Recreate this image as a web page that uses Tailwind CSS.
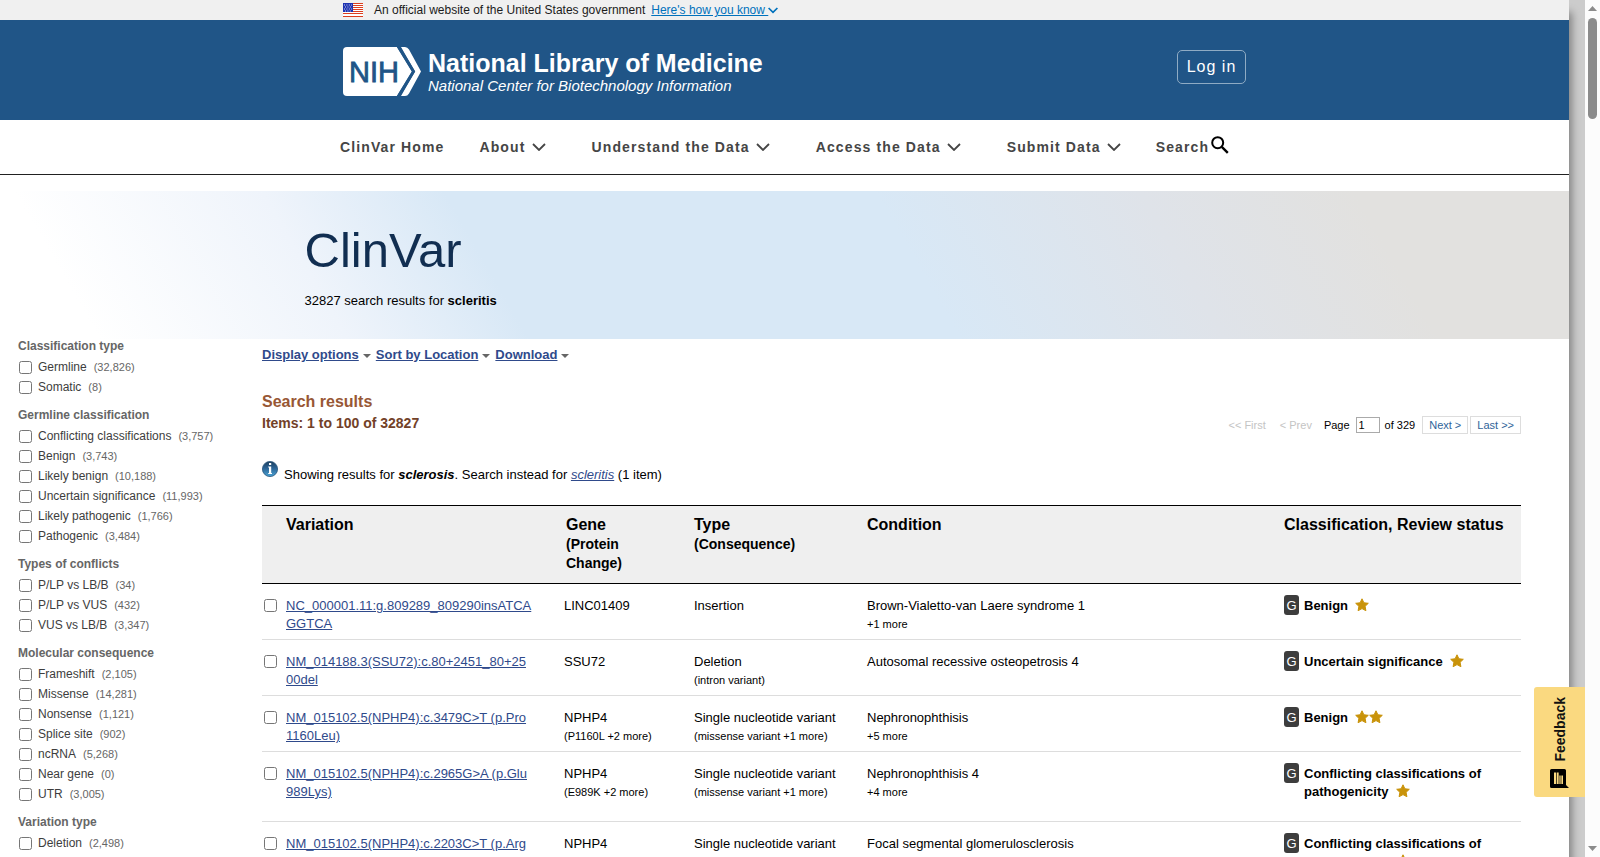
<!DOCTYPE html>
<html lang="en">
<head>
  <meta charset="UTF-8">
  <meta name="viewport" content="width=device-width, initial-scale=1.0">
  <title>scleritis - ClinVar - NCBI</title>
  <script src="https://cdn.jsdelivr.net/npm/@tailwindcss/browser@4"></script>
  <style>
    body {
      font-family: "Liberation Sans", Arial, Helvetica, sans-serif;
    }
  </style>
</head>
<body class="flex h-screen overflow-hidden bg-[#ccc] text-[13px] leading-[18px] text-black">
  <div class="relative h-screen min-w-0 flex-1 overflow-hidden bg-white shadow-[3px_12px_8px_#808080]">
    <!-- government banner -->
    <div class="h-5 bg-[#f0f0f0]">
      <div class="mx-auto flex h-5 max-w-[923px] items-center pl-5 text-xs text-[#1b1b1b]">
        <svg class="h-[14px] w-5" viewBox="0 0 20 14">
          <path fill="#fff" d="M0 0h20v14H0z"></path>
          <path stroke="#db3e1f" stroke-width="1.200" d="M0 .5h20M0 2.500h20M0 4.500h20M0 6.500h20M0 8.500h20M0 10.500h20M0 13.500h20"></path>
          <path fill="#1e33b1" d="M0 0h10v9H0z"></path>
          <path stroke="#fff" stroke-width=".8" stroke-dasharray="1 1.400" d="M1 2h8M2 4h7M1 6h8M2 8h7"></path>
        </svg>
        <span class="ml-[11px]">An official website of the United States government</span>
        <a href="#" class="ml-[6px] flex items-center text-[#0071bc] underline">Here's how you know&nbsp;<svg class="h-[7px] w-[10px]" viewBox="0 0 10 7" fill="none" stroke="currentColor" stroke-width="1.700"><path d="M.6 1 5 5.400 9.400 1"></path></svg></a>
      </div>
    </div>

    <header class="h-[100px] bg-[#205587]">
      <div class="mx-auto flex max-w-[923px] items-start justify-between pl-5">
        <a href="#" class="mt-[27px] flex text-white" aria-label="NLM home">
          <svg class="h-[49px] w-[78px]" viewBox="0 0 78 49">
            <path fill="#fff" d="M4 0h50l15 24.500L54 49H4a4 4 0 0 1-4-4V4a4 4 0 0 1 4-4z"></path>
            <path fill="#fff" d="M58 0h4q2.500 0 4 2.500L78 24.500 66 46.500Q64.500 49 62 49h-4l14-24.500z"></path>
            <path fill="none" stroke="#205587" stroke-width="3" d="M55 -1 70.500 24.500 55 50"></path>
            <text x="6" y="35" font-size="29" fill="#205587" stroke="#205587" stroke-width=".8">NIH</text>
          </svg>
          <span class="ml-[7px] mt-[2px] block">
            <span class="block text-[25px] leading-7 font-bold">National Library of Medicine</span>
            <span class="block text-[15px] leading-[18px] italic">National Center for Biotechnology Information</span>
          </span>
        </a>
        <button class="mt-[30px] h-[34px] w-[69px] rounded-[5px] border border-[#8fabc4] text-base tracking-[1px] text-white">Log in</button>
      </div>
    </header>

    <nav class="h-[55px] border-b border-[#212121]">
      <ul class="mx-auto flex h-[54px] max-w-[889px] items-center text-sm font-bold tracking-[0.08em] whitespace-nowrap text-[#454545]">
        <li><a href="#">ClinVar Home</a></li>
        <li class="ml-[35px]"><button class="flex items-center gap-[6px]">About <svg class="h-2 w-[14px]" viewBox="0 0 14 8" fill="none" stroke="currentColor" stroke-width="1.800"><path d="M1 1l6 6 6-6"></path></svg></button></li>
        <li class="ml-[46px]"><button class="flex items-center gap-[6px]">Understand the Data <svg class="h-2 w-[14px]" viewBox="0 0 14 8" fill="none" stroke="currentColor" stroke-width="1.800"><path d="M1 1l6 6 6-6"></path></svg></button></li>
        <li class="ml-[46px]"><button class="flex items-center gap-[6px]">Access the Data <svg class="h-2 w-[14px]" viewBox="0 0 14 8" fill="none" stroke="currentColor" stroke-width="1.800"><path d="M1 1l6 6 6-6"></path></svg></button></li>
        <li class="ml-[46px]"><button class="flex items-center gap-[6px]">Submit Data <svg class="h-2 w-[14px]" viewBox="0 0 14 8" fill="none" stroke="currentColor" stroke-width="1.800"><path d="M1 1l6 6 6-6"></path></svg></button></li>
        <li class="ml-[35px]"><button class="flex items-center gap-[2px]">Search <svg class="mb-1 h-[18px] w-[18px] text-black" viewBox="0 0 18 18" fill="none" stroke="currentColor" stroke-width="2"><circle cx="6.700" cy="6.700" r="5.500"></circle><path stroke-width="2.400" d="m10.800 10.800 6 6"></path></svg></button></li>
      </ul>
    </nav>

    <section class="mt-4 h-[148px] bg-[linear-gradient(60deg,#fff_6%,#eff4fb_21%,#d8e8f6_32%,#d8e8f6_58%,#dfe3e9_74%,#e2e1df_87%)]">
      <div class="mx-auto max-w-[960px] pt-[31px]">
        <h1 class="text-[49px] leading-[56px] text-[#112e51]">ClinVar</h1>
        <p class="mt-[14px]">32827 search results for <b>scleritis</b></p>
      </div>
    </section>

    <div class="flex">
      <aside id="filters" class="w-[262px] shrink-0 pl-[18px] text-xs"></aside>

      <main class="min-w-0 flex-1 pr-12">
        <div class="mt-[7px] flex gap-[5px] leading-[17px] font-bold text-[#2f4a8b]">
          <span class="flex items-center gap-1"><a href="#" class="underline">Display options</a><svg class="mt-[3px] h-1 w-2" viewBox="0 0 8 4" fill="#666"><path d="M0 0h8L4 4z"></path></svg></span>
          <span class="flex items-center gap-1"><a href="#" class="underline">Sort by Location</a><svg class="mt-[3px] h-1 w-2" viewBox="0 0 8 4" fill="#666"><path d="M0 0h8L4 4z"></path></svg></span>
          <span class="flex items-center gap-1"><a href="#" class="underline">Download</a><svg class="mt-[3px] h-1 w-2" viewBox="0 0 8 4" fill="#666"><path d="M0 0h8L4 4z"></path></svg></span>
        </div>

        <div class="mt-[29px] flex items-end justify-between">
          <div>
            <h2 class="text-base leading-5 font-bold text-[#985735]">Search results</h2>
            <h3 class="mt-px text-sm leading-5 font-bold text-[#724128]">Items: 1 to 100 of 32827</h3>
          </div>
          <div class="-mb-px flex items-center text-[11px] leading-4">
            <span class="text-[#c4c4c4]">&lt;&lt; First</span>
            <span class="ml-[14px] text-[#c4c4c4]">&lt; Prev</span>
            <label for="pageno" class="ml-3">Page</label>
            <input id="pageno" type="text" value="1" class="ml-[6px] h-4 w-6 border border-[#aaa] pl-[2px]">
            <span class="ml-[5px]">of 329</span>
            <a href="#" class="ml-[7px] border border-[#ddd] px-[6px] text-[#2f6499]">Next &gt;</a>
            <a href="#" class="ml-[2px] border border-[#ddd] px-[6px] text-[#2f6499]">Last &gt;&gt;</a>
          </div>
        </div>

        <div class="mt-7 flex gap-[6px] leading-[17px]">
          <svg class="h-4 w-4" viewBox="0 0 16 16">
            <defs><linearGradient id="ball" x2="0" y2="1"><stop stop-color="#1d3f5e"></stop><stop offset=".45" stop-color="#2c6496"></stop><stop offset="1" stop-color="#4aa3d4"></stop></linearGradient></defs>
            <circle cx="8" cy="8" r="7.600" fill="url(#ball)" stroke="#2a567c" stroke-width=".8"></circle>
            <path fill="#fff" d="M7 2h2.200v2H7zM6.200 5.500h3V12h.8v1H6.200v-1H7V6.500h-.8z"></path>
          </svg>
          <p class="mt-[5px]">Showing results for <b><i>sclerosis</i></b>. Search instead for <a href="#" class="text-[#2f4a8b] italic underline">scleritis</a> (1 item)</p>
        </div>

        <table class="mt-[22px] w-full table-fixed border-collapse text-left">
          <colgroup>
            <col class="w-6"><col class="w-[278px]"><col class="w-[130px]"><col class="w-[173px]"><col><col class="w-[237px]">
          </colgroup>
          <thead class="border-y border-black bg-[#efefef]">
            <tr class="h-[78px] align-top text-base leading-5 font-bold">
              <th></th>
              <th class="pt-[9px]">Variation</th>
              <th class="pt-[9px] pl-[2px]">Gene<br><span class="block w-20 text-sm leading-[19px]">(Protein Change)</span></th>
              <th class="pt-[9px]">Type<br><span class="block text-sm leading-[19px]">(Consequence)</span></th>
              <th class="pt-[9px]">Condition</th>
              <th class="pt-[9px]">Classification, Review status</th>
            </tr>
          </thead>
          <tbody id="results"></tbody>
        </table>
      </main>
    </div>
  </div>

  <div class="w-4 shrink-0"></div>

  <!-- scrollbar -->
  <div class="relative z-10 flex w-[15px] shrink-0 flex-col items-center justify-between bg-[#fcfcfc] py-[6px]">
    <div class="flex flex-col items-center gap-[7px]">
      <svg class="h-[5px] w-[9px]" viewBox="0 0 9 5" fill="#8b8b8b"><path d="M0 5h9L4.500 0z"></path></svg>
      <div class="h-[101px] w-[9px] rounded-full bg-[#8b8b8b]"></div>
    </div>
    <svg class="h-[5px] w-[9px]" viewBox="0 0 9 5" fill="#8b8b8b"><path d="M0 0h9L4.500 5z"></path></svg>
  </div>

  <button class="fixed right-[15px] bottom-[60px] flex h-[110px] w-[51px] flex-col items-center justify-between rounded-l-[3px] bg-[#fad980] pt-[10px] pb-[9px] text-[#111] font-bold">
    <span class="rotate-180 text-sm leading-5 [writing-mode:vertical-rl]">Feedback</span>
    <svg class="h-[19px] w-[19px]" viewBox="0 0 19 19">
      <path d="M1.500 0h13A1.500 1.500 0 0 1 16 1.500V16l3 3H1.500A1.500 1.500 0 0 1 0 17.500v-16A1.500 1.500 0 0 1 1.500 0z"></path>
      <path fill="#fad980" d="M4 3.500h5v3h4V15H4z"></path>
      <path stroke="#000" stroke-width=".7" d="M6.500 3v12M9 3v12M11 6v9"></path>
    </svg>
  </button>

  <script>
    const filters = [
      ["Classification type", [["Germline", "32,826"], ["Somatic", "8"]]],
      ["Germline classification", [["Conflicting classifications", "3,757"], ["Benign", "3,743"], ["Likely benign", "10,188"], ["Uncertain significance", "11,993"], ["Likely pathogenic", "1,766"], ["Pathogenic", "3,484"]]],
      ["Types of conflicts", [["P/LP vs LB/B", "34"], ["P/LP vs VUS", "432"], ["VUS vs LB/B", "3,347"]]],
      ["Molecular consequence", [["Frameshift", "2,105"], ["Missense", "14,281"], ["Nonsense", "1,121"], ["Splice site", "902"], ["ncRNA", "5,268"], ["Near gene", "0"], ["UTR", "3,005"]]],
      ["Variation type", [["Deletion", "2,498"], ["Duplication", "1,204"]]]
    ];

    document.getElementById("filters").innerHTML = filters.map(([title, items]) => `
      <h3 class="mb-1 leading-[14px] font-bold text-[#666]">${title}</h3>
      <ul class="mb-[11px]">
        ${items.map(([name, count]) => `<li class="h-5"><label class="flex h-5 items-center pl-[1px] text-[#3d3d3d]"><input type="checkbox" class="mr-[6px] h-[13px] w-[13px]">${name}<span class="ml-[7px] text-[11px] text-[#666]">(${count})</span></label></li>`).join("")}
      </ul>`).join("");

    const rows = [
      { name: ["NC_000001.11:g.809289_809290insATCA", "GGTCA"], gene: "LINC01409", protein: "", type: "Insertion", effect: "", condition: "Brown-Vialetto-van Laere syndrome 1", more: "+1 more", status: "Benign", stars: 1 },
      { name: ["NM_014188.3(SSU72):c.80+2451_80+25", "00del"], gene: "SSU72", protein: "", type: "Deletion", effect: "(intron variant)", condition: "Autosomal recessive osteopetrosis 4", more: "", status: "Uncertain significance", stars: 1 },
      { name: ["NM_015102.5(NPHP4):c.3479C>T (p.Pro", "1160Leu)"], gene: "NPHP4", protein: "(P1160L +2 more)", type: "Single nucleotide variant", effect: "(missense variant +1 more)", condition: "Nephronophthisis", more: "+5 more", status: "Benign", stars: 2 },
      { name: ["NM_015102.5(NPHP4):c.2965G>A (p.Glu", "989Lys)"], gene: "NPHP4", protein: "(E989K +2 more)", type: "Single nucleotide variant", effect: "(missense variant +1 more)", condition: "Nephronophthisis 4", more: "+4 more", status: "Conflicting classifications of pathogenicity", stars: 1, tall: true },
      { name: ["NM_015102.5(NPHP4):c.2203C>T (p.Arg", "735Trp)"], gene: "NPHP4", protein: "(R735W +2 more)", type: "Single nucleotide variant", effect: "(missense variant +1 more)", condition: "Focal segmental glomerulosclerosis", more: "+4 more", status: "Conflicting classifications of pathogenicity", stars: 1, tall: true }
    ];

    const star = `<svg class="inline-block h-[14px] w-[14px] align-[-2px]" viewBox="0 0 14 14"><path fill="#c9930a" stroke="#c9930a" stroke-linejoin="round" d="M7 .8l1.900 4 4.400.5-3.200 3 .8 4.400L7 10.600l-3.900 2.100.8-4.400-3.200-3 4.400-.5z"></path></svg>`;

    document.getElementById("results").innerHTML = rows.map((row) => `
      <tr class="${row.tall ? "h-[70px]" : "h-[56px]"} border-b border-[#ddd] align-top">
        <td class="pt-[15px] pl-[2px]"><input type="checkbox" aria-label="${row.name.join("")}" class="block h-[13px] w-[13px]"></td>
        <td class="pt-[13px]"><a href="#" class="text-[#2f4a8b] underline">${row.name.join("<br>")}</a></td>
        <td class="pt-[13px]">${row.gene}<span class="block text-[11px]">${row.protein}</span></td>
        <td class="pt-[13px]">${row.type}<span class="block text-[11px]">${row.effect}</span></td>
        <td class="pt-[13px]">${row.condition}<span class="block text-[11px]">${row.more}</span></td>
        <td class="pt-[11px]">
          <div class="flex items-start gap-[5px]">
            <span class="h-5 w-[15px] shrink-0 rounded-[3px] bg-[#3d3d3d] text-center leading-[21px] text-white">G</span>
            <span class="mt-[2px] w-[190px] font-bold">${row.status}<span class="ml-[7px] whitespace-nowrap">${star.repeat(row.stars)}</span></span>
          </div>
        </td>
      </tr>`).join("");
  </script>
</body>
</html>
